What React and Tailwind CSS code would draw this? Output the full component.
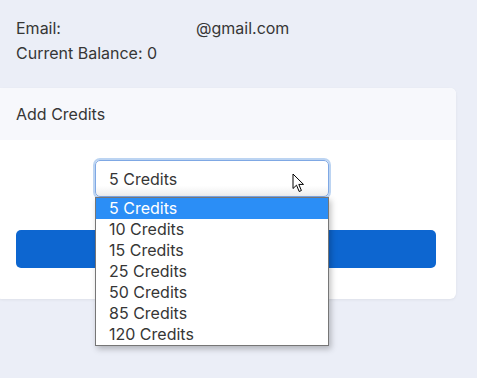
export default function App() {
  const options = ["5 Credits", "10 Credits", "15 Credits", "25 Credits", "50 Credits", "85 Credits", "120 Credits"]

  return (
    <div className="min-h-screen bg-[#ebeef7] font-['Inter',sans-serif] text-[16px] text-[#363636]">
      <div className="px-4 pt-4 leading-[25px]">
        <div className="flex">
          <span className="w-[180px]">Email:</span>
          <span>@gmail.com</span>
        </div>
        <div>Current Balance: 0</div>
      </div>

      <div className="mt-[22px] ml-[-4px] w-[460px] rounded-md bg-white shadow-[0_1px_3px_rgba(0,0,0,0.06)]">
        <div className="flex h-[52px] items-center rounded-t-md bg-[#f7f8fc] px-5">Add Credits</div>

        <div className="px-5 pt-5 pb-[25px]">
          <div className="relative ml-[79px] w-[234px]">
            <div className="flex h-[37px] items-center rounded-[5px] border border-[#7fa8e4] bg-gradient-to-b from-white from-70% to-[#eeeeee] px-[13px] ring-2 ring-[#bcd4f2]">
              5 Credits
            </div>
            <svg className="absolute left-[197px] top-[13px]" width="14" height="20" viewBox="0 0 14 20">
              <path d="M1 1 L1 15.5 L4.5 12.2 L7.2 18.5 L9.4 17.5 L6.8 11.4 L11.5 11.4 Z" fill="white" stroke="black" strokeWidth="1" strokeLinejoin="round" />
            </svg>
            <div className="absolute left-0 top-full z-10 w-[234px] border border-[#767676] bg-white shadow-[2px_3px_6px_rgba(0,0,0,0.25)]">
              {options.map((o, i) => (
                <div
                  key={o}
                  className={i === 0 ? "h-[21px] bg-[#2b8ef6] px-[13px] leading-[21px] text-white" : "h-[21px] px-[13px] leading-[21px]"}
                >
                  {o}
                </div>
              ))}
            </div>
          </div>

          <button className="mt-[33px] h-[38px] w-full rounded-[5px] bg-[#0d66d0]"></button>
        </div>
      </div>
    </div>
  )
}
